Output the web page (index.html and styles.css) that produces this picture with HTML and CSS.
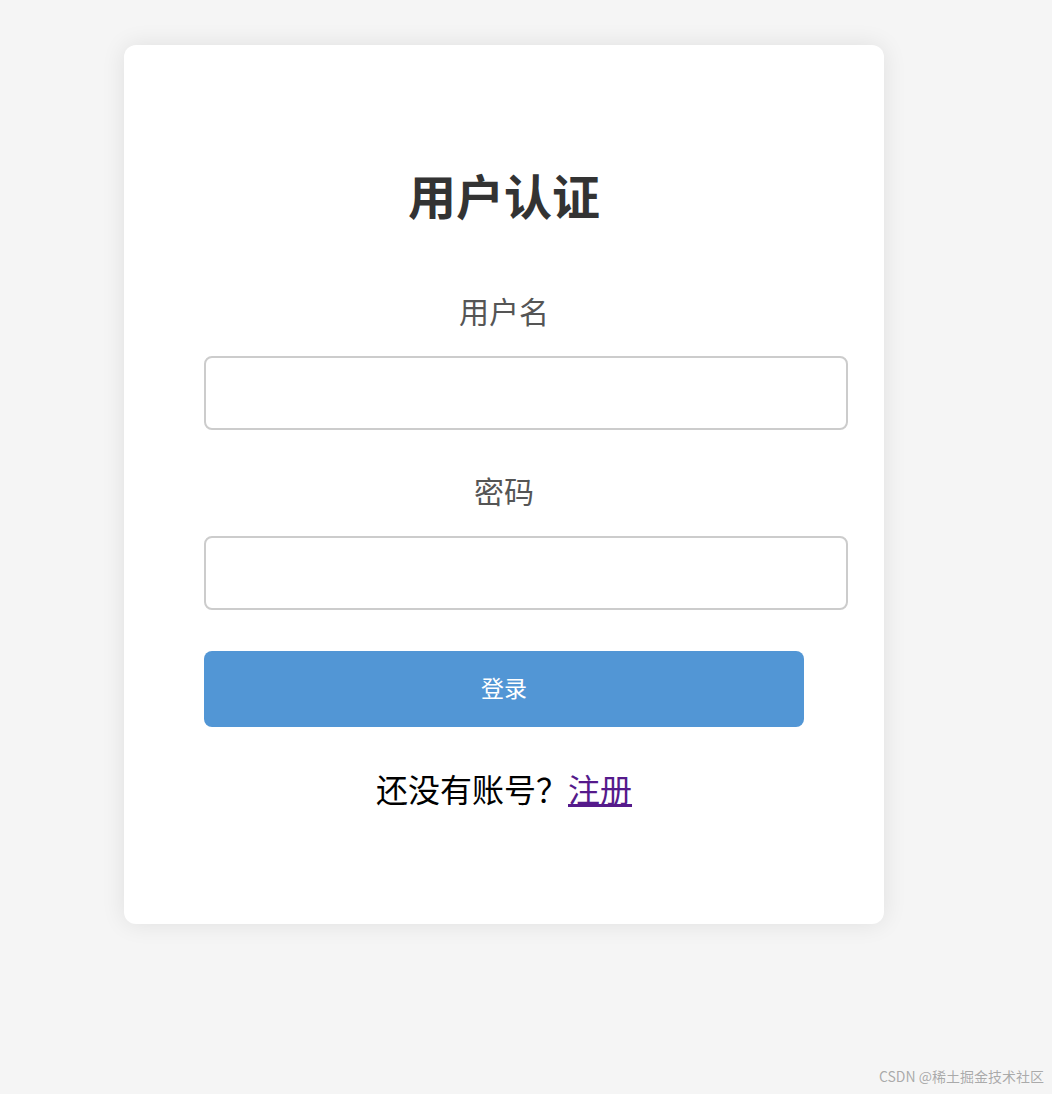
FILE: index.html
```html
<!DOCTYPE html>
<html lang="zh-CN">
<head>
<meta charset="utf-8">
<title>用户认证</title>
<link rel="stylesheet" href="styles.css">
</head>
<body>
<div class="card">
  <h1 class="title">用户认证</h1>
  <form class="form">
    <label class="label" for="username">用户名</label>
    <input class="input" id="username" type="text">
    <label class="label label-second" for="password">密码</label>
    <input class="input" id="password" type="password">
    <button class="btn" type="button">登录</button>
  </form>
  <p class="signup">还没有账号？<a href="#" class="link">注册</a></p>
</div>
<div class="watermark">CSDN @稀土掘金技术社区</div>
</body>
</html>
```

FILE: styles.css
```css
html, body {
  margin: 0;
  padding: 0;
}
body {
  background: #f5f5f5;
  font-family: "Noto Sans CJK SC", "Noto Sans", sans-serif;
  width: 1052px;
  height: 1094px;
  position: relative;
  overflow: hidden;
}
.card {
  box-sizing: border-box;
  margin: 45px 0 0 124px;
  width: 760px;
  height: 879px;
  padding: 122px 80px 0;
  background: #fff;
  border-radius: 12px;
  box-shadow: 0 0 24px rgba(0, 0, 0, 0.09);
}
.title {
  margin: 0;
  font-size: 48px;
  line-height: 54px;
  font-weight: 700;
  color: #333;
  text-align: center;
}
.form {
  display: flex;
  flex-direction: column;
  margin-top: 72px;
}
.label {
  font-size: 30px;
  line-height: 34px;
  color: #555;
  text-align: center;
  margin-bottom: 29px;
}
.label-second {
  margin-top: 43px;
}
.input {
  box-sizing: content-box;
  width: 600px;
  height: 70px;
  padding: 0 20px;
  margin: 0;
  border: 2px solid #ccc;
  border-radius: 8px;
  background: #fff;
  font-size: 24px;
  outline: none;
}
.btn {
  margin-top: 41px;
  width: 600px;
  height: 76px;
  border: none;
  border-radius: 8px;
  background: #5296d5;
  color: #fff;
  font-family: "Noto Sans CJK SC", "Noto Sans", sans-serif;
  font-size: 23px;
  line-height: 30px;
  padding: 0 0 4px;
}
.signup {
  margin: 44px 0 0;
  font-size: 32px;
  line-height: 34px;
  color: #000;
  text-align: center;
}
.link {
  color: #551a8b;
  text-decoration: underline;
}
.watermark {
  position: absolute;
  right: 8px;
  top: 1066px;
  font-size: 14px;
  line-height: 20px;
  color: rgba(120, 120, 120, 0.6);
  white-space: nowrap;
}
```
